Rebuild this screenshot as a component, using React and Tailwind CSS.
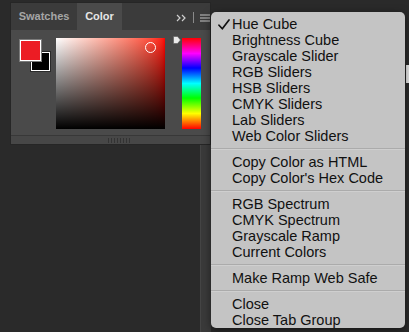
import React from 'react';

const groups = [
  ['Hue Cube', 'Brightness Cube', 'Grayscale Slider', 'RGB Sliders', 'HSB Sliders', 'CMYK Sliders', 'Lab Sliders', 'Web Color Sliders'],
  ["Copy Color as HTML", "Copy Color's Hex Code"],
  ['RGB Spectrum', 'CMYK Spectrum', 'Grayscale Ramp', 'Current Colors'],
  ['Make Ramp Web Safe'],
  ['Close', 'Close Tab Group'],
];

function FlyoutMenu() {
  return (
    <div className="absolute left-[211px] top-[12px] w-[194px] h-[316px] rounded-[5px] bg-[#c4c4c4] pt-[4px] shadow-[0_2px_8px_rgba(0,0,0,0.5)] font-['Liberation_Sans',sans-serif] text-[14.5px] text-[#111]">
      {groups.map((items, gi) => (
        <div key={gi}>
          {gi > 0 && (
            <div className="h-[10px] flex flex-col justify-center">
              <div className="h-px bg-[#ababab]" />
              <div className="h-px bg-[#cfcfcf]" />
            </div>
          )}
          {items.map((label, i) => (
            <div key={label} className="h-[16px] flex items-center leading-none">
              <span className="w-[21px] pl-[7px] flex items-center">
                {gi === 0 && i === 0 && (
                  <svg width="12" height="11" viewBox="0 0 12 11">
                    <path d="M1 6.2l3.3 3.6L11 1" fill="none" stroke="#111" strokeWidth="1.7" strokeLinecap="round" strokeLinejoin="round" />
                  </svg>
                )}
              </span>
              <span>{label}</span>
            </div>
          ))}
        </div>
      ))}
    </div>
  );
}

function ColorPanel() {
  return (
    <div className="w-[201px] border border-[#262626] bg-[#3b3b3b] font-['Liberation_Sans',sans-serif]">
      <div className="h-[27px] flex items-stretch text-[11px] font-bold">
        <div className="w-[66px] flex items-center justify-center text-[#a6a6a6]">Swatches</div>
        <div className="w-[45px] flex items-center justify-center bg-[#4a4a4a] text-[#e6e6e6]">Color</div>
        <div className="flex-1 flex items-center justify-end gap-[6px]">
          <svg width="11" height="8" viewBox="0 0 11 8" className="mt-[2px]">
            <path d="M1 1l3 3-3 3M6 1l3 3-3 3" fill="none" stroke="#cfcfcf" strokeWidth="1.2" />
          </svg>
          <div className="w-px h-[11px] bg-[#8a8a8a] mt-[2px]" />
          <svg width="10" height="8" viewBox="0 0 10 8" className="mt-[2px]">
            <path d="M0 1h10M0 4h10M0 7h10" stroke="#c8c8c8" strokeWidth="1" />
          </svg>
        </div>
      </div>
      <div className="h-[105px] bg-[#4a4a4a] flex pt-[8px]">
        <div className="relative w-[45px] shrink-0">
          <div className="absolute left-[20px] top-[14px] w-[19px] h-[19px] bg-black border border-white outline outline-1 outline-[#2a2a2a]" />
          <div className="absolute left-[9px] top-[2px] w-[21px] h-[21px] bg-[#ec1c24] border border-white outline outline-1 outline-[#7a7a7a]" />
        </div>
        <div className="relative w-[109px] h-[91px] bg-linear-to-r from-white to-[#ff0000]">
          <div className="absolute inset-0 bg-linear-to-t from-black to-transparent" />
          <div className="absolute left-[89px] top-[4px] w-[11px] h-[11px] rounded-full border-[1.5px] border-white" />
        </div>
        <div className="w-[17px] flex justify-end pr-[1px]">
          <svg width="8" height="8" viewBox="0 0 8 8" className="-mt-[2px]">
            <path d="M0.5 0.5h4l3 3.5-3 3.5h-4z" fill="#ececec" stroke="#5a5a5a" strokeWidth="0.6" />
          </svg>
        </div>
        <div className="w-[19px] h-[91px] bg-[linear-gradient(to_bottom,#ff0000,#ff00ff_17%,#0000ff_33%,#00ffff_50%,#00ff00_66%,#ffff00_83%,#ff0000)]" />
      </div>
      <div className="h-px bg-[#383838]" />
      <div className="h-[8px] bg-[#474747] flex items-center justify-center gap-[2px] pl-[17px]">
        {Array.from({ length: 8 }).map((_, i) => (
          <div key={i} className="w-px h-[5px] bg-[#333]" />
        ))}
      </div>
    </div>
  );
}

export default function App() {
  return (
    <div className="relative w-[409px] h-[332px] overflow-hidden bg-[#2a2a2a] flex">
      <div className="w-[211px] shrink-0 flex flex-col pl-[10px] pt-[2px]">
        <ColorPanel />
        <div className="ml-auto w-[11px] flex-1 bg-[#3a3a3a] border-l border-[#444]" />
      </div>
      <div className="flex-1" />
      <div className="w-[3px] mt-[65px] h-[18px] bg-[#e8e8e8]" />
      <FlyoutMenu />
    </div>
  );
}
